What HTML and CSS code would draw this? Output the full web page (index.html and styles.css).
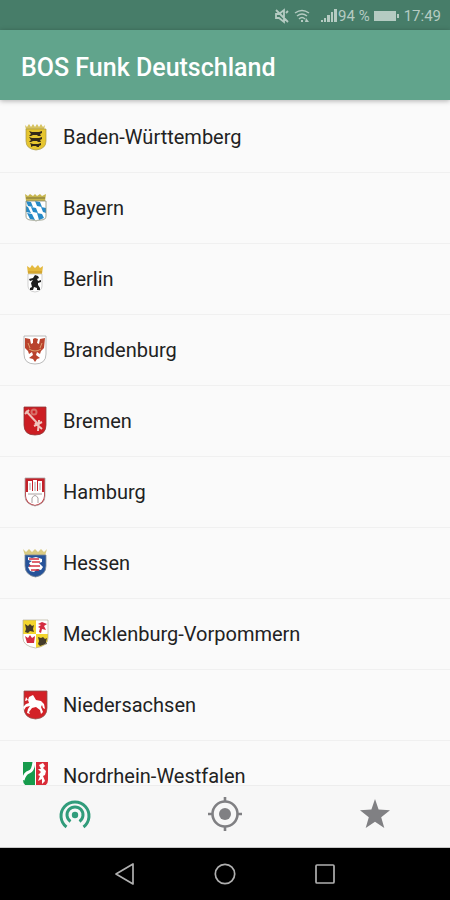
FILE: index.html
```html
<!DOCTYPE html>
<html lang="de">
<head>
<meta charset="UTF-8">
<meta name="viewport" content="width=device-width, initial-scale=1.0">
<title>BOS Funk Deutschland</title>
<link rel="stylesheet" href="styles.css">
</head>
<body>
<div class="status-bar">
<svg class="status-icon" viewBox="0 0 16 16" aria-hidden="true"><path d="M2 6h3l5-4v12l-5-4H2zM2 2l12 12M12 5l2-2" fill="none" stroke="currentColor" stroke-width="1.8"/></svg>
<svg class="status-icon wifi" viewBox="0 0 16 16" aria-hidden="true"><path d="M1 5q7-5 14 0M3 8q5-4 10 0M5 11q3-3 6 0" fill="none" stroke="currentColor" stroke-width="1.5"/><path d="M7 12h2v2H7zM12 10l3 4h-4z" fill="currentColor"/></svg>
<svg class="signal" viewBox="0 0 18 16" aria-hidden="true"><path d="M1 12h2v2H1zM4 10h2v4H4zM7 7h3v7H7zM11 4h2v10h-2zM14 1h3v13h-3z" fill="currentColor"/></svg>
<span>94 %</span>
<svg class="battery" viewBox="0 0 26 12" aria-hidden="true"><path d="M0 1h22v10H0zM23 4h2v4h-2z" fill="currentColor"/></svg>
<span>17:49</span>
</div>
<header class="app-bar">
<h1>BOS Funk Deutschland</h1>
</header>
<main class="content">
<ul class="states">
<li><a href="#bw">
<svg class="crest" viewBox="0 0 28 30" aria-hidden="true"><path d="M4 3l2 2 2-3 2 3 2-3 2 3 2-3 2 3 2-3 2 3 2-2-1 5H5z" fill="#d7c361"/><path d="M5 7h20v12q0 8-10 9Q5 27 5 19z" fill="#e6c52f" stroke="#a89544" stroke-width=".7"/><path d="M8 9l3 1h7l3-1v2l-2 1 1 2h-3l-1-1h-4l-2 1H8l2-2zM8 15l3 1h7l3-1v2l-2 1 1 2h-3l-1-1h-4l-2 1H8l2-2zM9 21l3 1h5l3-1v2l-2 1v1h-2l-1-1h-3l-2 1v-2z" fill="#342918"/></svg>
Baden-Württemberg</a></li>
<li><a href="#by">
<svg class="crest" viewBox="0 0 28 30" aria-hidden="true"><path d="M4 1l3 2 2-2 3 2 2-2 2 2 3-2 2 2 4-2-1 7H5z" fill="#c7b64e"/><path d="M5 5h19" stroke="#78713a"/><path d="M5 8h20v15q0 4-5 4-4 0-5 1-1-1-5-1-5 0-5-4z" fill="#fff"/><path d="M5 8l5 1 2 5-5-1zM14 8l5 1 2 5-5-1zM10 14l5 1 2 5-5-1zM20 14l5 1v5l-3-1zM5 13l2 1 3 6-5-1zM6 20l5 1 3 6-5-1zM16 20l5 1 2 4-5 2z" fill="#268ac7"/><path d="M5 8h20v15q0 4-5 4-4 0-5 1-1-1-5-1-5 0-5-4z" fill="none" stroke="#878b76" stroke-width=".8"/></svg>
Bayern</a></li>
<li><a href="#be">
<svg class="crest" viewBox="0 0 28 30" aria-hidden="true"><path d="M6 2l3 2 2-3 3 3 3-3 2 3 3-2-1 8H7z" fill="#e4b93e"/><path d="M7 8h14" stroke="#c69322"/><path d="M7 10h14v12q0 5-7 6-7-1-7-6z" fill="#fff" stroke="#bbb" stroke-width=".7"/><path d="M14 11l3 1 1 2-2 1 1 2 3-1v2l-3 1v2l2 3v2h-3v-2l-3-1-1 3h-3v-2l2-1-1-4 2-3-3 1-1-2 4-1z" fill="#1f1f1f"/></svg>
Berlin</a></li>
<li><a href="#bb">
<svg class="crest" viewBox="0 0 28 30" aria-hidden="true"><path d="M3 1h22v18q0 10-11 10T3 19z" fill="#fff" stroke="#aaa" stroke-width=".8"/><path d="M12 4l2-1 3 1-1 4 2 1 1-5 5-1-1 10-3 3-1 3-3-2-1 3 4 3-3 1-2 3-2-3-4-1 4-3-1-3-3 2-1-3-3-3L4 3l5 1 1 5 2-1z" fill="#b9432d"/><path d="M7 8l2 5M21 8l-2 5M8 14q6 4 12 0" fill="none" stroke="#dda06d"/></svg>
Brandenburg</a></li>
<li><a href="#hb">
<svg class="crest" viewBox="0 0 28 30" aria-hidden="true"><path d="M3 1h22v18q0 10-11 10T3 19z" fill="#cc1d23" stroke="#8d3839" stroke-width=".8"/><path d="M5 5l12 13" stroke="#eec0b8" stroke-width="2"/><path d="M13 20l8-4M14 17l7 6M18 14l-1 11" stroke="#f1c7c0" stroke-width="2"/><path d="M4 8l4-4" stroke="#eec0b8" stroke-width="2"/><circle cx="13" cy="6" r="2.500" fill="none" stroke="#d77068" stroke-width="2"/></svg>
Bremen</a></li>
<li><a href="#hh">
<svg class="crest" viewBox="0 0 28 30" aria-hidden="true"><path d="M4 1h20v18q0 8-10 10Q4 27 4 19z" fill="#c32129" stroke="#aaa" stroke-width=".8"/><path d="M7 4h4v10h1V3h4v11h1V4h4v11h2v4q0 7-9 9-9-2-9-9v-4h2z" fill="#fff"/><path d="M9 6v7M14 5v9M19 6v7M7 17h14M11 26v-5q3-5 6 0v5" fill="none" stroke="#a9a0a0"/></svg>
Hamburg</a></li>
<li><a href="#he">
<svg class="crest" viewBox="0 0 28 30" aria-hidden="true"><path d="M2 1l3 3 3-3 3 3 3-3 3 3 3-3 3 3 3-3-2 7H4z" fill="#d9ca82"/><path d="M4 7h21v11q0 9-10.500 11Q4 27 4 18z" fill="#26539a" stroke="#7c8995" stroke-width=".8"/><path d="M7 9l4 1 4-1 6 2v3l-3 1 4 4-2 3-4-1-3 3-4-1-2-4 3-1-2-3 3-2-4-1z" fill="#fff"/><path d="M8 11h10M11 14h8M8 18h11M10 22h8" stroke="#d33242" stroke-width="1.500"/></svg>
Hessen</a></li>
<li><a href="#mv">
<svg class="crest" viewBox="0 0 28 30" aria-hidden="true"><path d="M2 1h25v18q0 8-12.500 10Q2 27 2 19z" fill="#fff"/><path d="M2 1h13v14H2zM15 15h12v4q0 8-12 10z" fill="#f3d62d"/><path d="M4 5l3 2 2-2 2 2 2-1-1 4 1 3-4-1-2 2-3-1 1-3zM17 18l3 1 2-1 2 2 2-1-1 4 1 2-4 1-3 1-2-2 1-3z" fill="#443b29"/><path d="M17 5l4-2 5 2-3 2 2 4-4-1-1 4-2-1 1-4-2-1 3-2zM4 17l3 2 2-3 2 3 3-2-1 7H6z" fill="#d42c40"/><path d="M2 1h25v18q0 8-12.500 10Q2 27 2 19z" fill="none" stroke="#b5af99" stroke-width=".7"/></svg>
Mecklenburg-Vorpommern</a></li>
<li><a href="#ni">
<svg class="crest" viewBox="0 0 28 30" aria-hidden="true"><path d="M3 1h23v17q0 10-11.500 11Q3 28 3 18z" fill="#d32127" stroke="#91534f" stroke-width=".8"/><path d="M5 7l2 3 1-3 4-2 3 5 5 1 3 3 1 5-2-1-1-3-1 2 2 5-2 2-1-4-4-3-4 1-3 4 1 2-3-1 1-4 2-3-4 1-2 3-1-3 3-3 3-1-1-3-3 1z" fill="#fff"/></svg>
Niedersachsen</a></li>
<li><a href="#nw">
<svg class="crest" viewBox="0 0 28 30" aria-hidden="true"><path d="M2 1h25v18q0 8-12.500 10Q2 27 2 19z" fill="#fff"/><path d="M2 1h12v27Q2 26 2 19z" fill="#169b4c"/><path d="M15 1h12v18q0 7-12 9z" fill="#d92c38"/><path d="M2 19q2-7 6-8t5-10" fill="none" stroke="#fff" stroke-width="3"/><path d="M18 4l4-2 2 3-2 2 3 3-1 4-2 1 2 5-3 3v-5l-4 2 2-5-2-1 3-3-3-3h3z" fill="#fff"/></svg>
Nordrhein-Westfalen</a></li>
</ul>
</main>
<nav class="tab-bar" aria-label="Hauptnavigation">
<button class="tab active" type="button" aria-label="Funk">
<svg viewBox="0 0 36 36" aria-hidden="true"><circle cx="18" cy="19" r="3.200" fill="currentColor"/><path d="M9.500 31A14 14 0 1 1 26.500 31M13.500 25.500A8 8 0 1 1 22.500 25.500" fill="none" stroke="currentColor" stroke-width="3"/></svg>
</button>
<button class="tab" type="button" aria-label="Standort">
<svg viewBox="0 0 36 36" aria-hidden="true"><circle cx="18" cy="18" r="6" fill="currentColor"/><circle cx="18" cy="18" r="12.500" fill="none" stroke="currentColor" stroke-width="2.600"/><path d="M18 1v5M18 30v5M1 18h5M30 18h5" stroke="currentColor" stroke-width="2.600"/></svg>
</button>
<button class="tab" type="button" aria-label="Favoriten">
<svg viewBox="0 0 36 36" aria-hidden="true"><path d="M18 3l3.600 10.500L33 14.300l-8.800 7L27.300 32 18 25.800 8.700 32l3.100-10.700-8.800-7 11.400-.8z" fill="currentColor"/></svg>
</button>
</nav>
<div class="system-bar">
<button type="button" aria-label="Zurück"><svg viewBox="0 0 24 24" aria-hidden="true"><path d="M20 2v20L3 12z" fill="none" stroke="currentColor" stroke-width="1.700" stroke-linejoin="round"/></svg></button>
<button type="button" aria-label="Startseite"><svg viewBox="0 0 24 24" aria-hidden="true"><circle cx="12" cy="12" r="9.700" fill="none" stroke="currentColor" stroke-width="1.700"/></svg></button>
<button type="button" aria-label="Übersicht"><svg viewBox="0 0 24 24" aria-hidden="true"><rect x="3" y="3" width="18" height="18" rx="1" fill="none" stroke="currentColor" stroke-width="1.700"/></svg></button>
</div>
</body>
</html>
```

FILE: styles.css
```css
* {
margin: 0;
padding: 0;
box-sizing: border-box;
}
body {
display: flex;
flex-direction: column;
height: 100vh;
font-family: Roboto, sans-serif;
background-color: #fafafa;
color: #222;
}
button {
border: 0;
background: none;
color: inherit;
cursor: pointer;
}
.status-bar {
display: flex;
flex: none;
align-items: center;
justify-content: flex-end;
height: 30px;
padding: 2px 9px 0 0;
background-color: #477d69;
color: #b5cbc2;
font-size: 15px;
}
.status-icon {
width: 16px;
height: 16px;
margin-right: 4px;
}
.wifi {
margin-right: 10px;
}
.signal {
width: 18px;
height: 16px;
}
.battery {
width: 26px;
height: 12px;
margin: 0 4px;
}
.app-bar {
display: flex;
flex: none;
align-items: center;
height: 70px;
padding: 4px 21px 0;
background-color: #61a48c;
color: #fff;
box-shadow: 0 1px 5px rgba(0, 0, 0, 0.3);
z-index: 1;
}
.app-bar h1 {
font-size: 25px;
font-weight: 500;
}
.content {
flex: 1;
min-height: 0;
overflow: hidden;
}
.states {
padding-top: 2px;
list-style: none;
}
.states a {
display: flex;
align-items: center;
gap: 14px;
height: 71px;
padding: 0 21px;
border-bottom: 1px solid #f0f0f0;
color: #222;
font-size: 20px;
line-height: 20px;
text-decoration: none;
}
.crest {
flex: none;
width: 28px;
height: 30px;
}
.tab-bar {
display: flex;
flex: none;
height: 63px;
background-color: #f7f7f7;
border-top: 1px solid #ededed;
border-bottom: 1px solid #c8c8c8;
color: #808083;
}
.tab {
display: flex;
flex: 1;
align-items: center;
justify-content: center;
padding-bottom: 5px;
}
.tab svg {
width: 36px;
height: 36px;
}
.active {
color: #319c7b;
}
.system-bar {
display: flex;
flex: none;
justify-content: center;
gap: 76px;
height: 52px;
background-color: #000;
color: #b0b0b0;
}
.system-bar svg {
display: block;
width: 24px;
height: 24px;
}
```
